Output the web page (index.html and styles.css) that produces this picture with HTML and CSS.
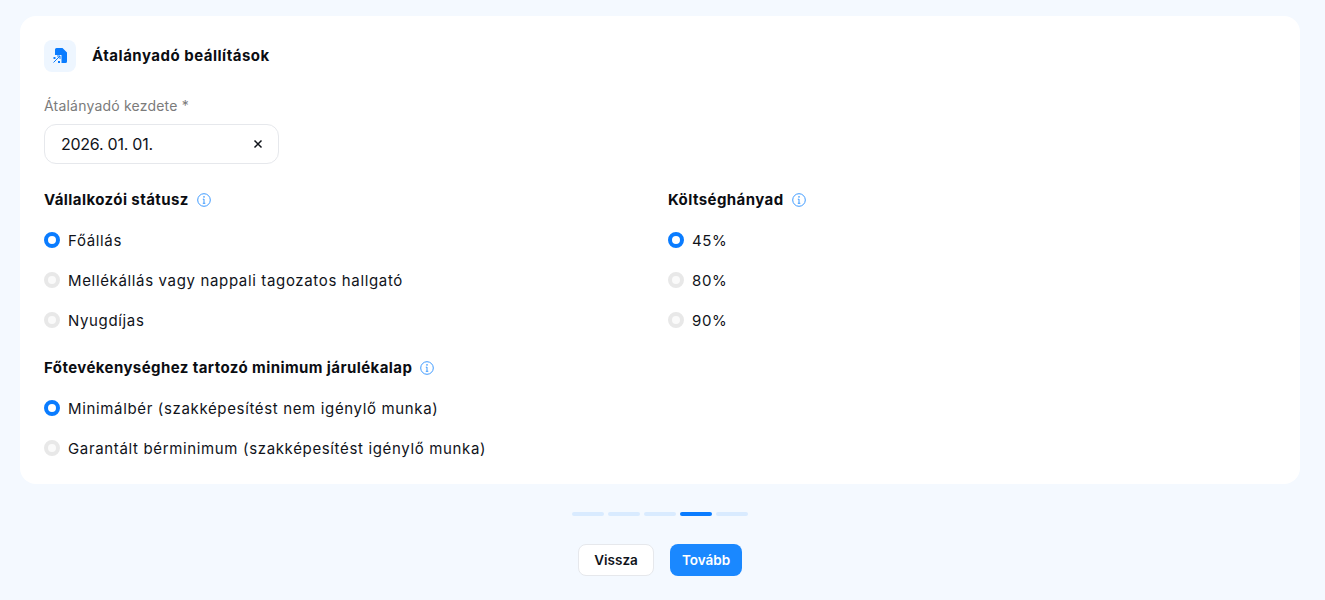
FILE: index.html
```html
<!DOCTYPE html>
<html lang="hu">
<head>
<meta charset="utf-8">
<title>Átalányadó beállítások</title>
<link rel="stylesheet" href="styles.css">
</head>
<body>
<main class="page">
  <section class="card">
    <header class="card-head">
      <span class="head-icon">
        <svg width="16" height="16" viewBox="0 0 16 16" aria-hidden="true">
          <path d="M4.500 0H10.500L15 4.500V13.500a1.500 1.500 0 0 1-1.500 1.500H9.500V7H3V1.500A1.500 1.500 0 0 1 4.500 0z" fill="#0a7cff"/>
          <path d="M1.500 14.500 8 8M5 8h3v3" fill="none" stroke="#0a7cff" stroke-width="1"/>
          <rect x="1.500" y="9" width="2" height="2" fill="#0a7cff"/>
          <rect x="6" y="13" width="2" height="2" fill="#0a7cff"/>
        </svg>
      </span>
      <h1 class="card-title">Átalányadó beállítások</h1>
    </header>

    <div class="date-field">
      <label class="field-label" for="start">Átalányadó kezdete *</label>
      <div class="date-input">
        <span id="start" class="date-value">2026. 01. 01.</span>
        <svg class="clear" width="10" height="10" viewBox="0 0 10 10" aria-hidden="true"><path d="M1.500 1.500l7 7M8.500 1.500l-7 7" stroke="#10131a" stroke-width="1.500" fill="none"/></svg>
      </div>
    </div>

    <div class="cols">
      <div class="group">
        <h2 class="group-title">Vállalkozói státusz
          <svg class="info" width="14" height="14" viewBox="0 0 14 14" aria-hidden="true"><circle cx="7" cy="7" r="6.300" fill="none" stroke="#3f9bff" stroke-width="1"/><path d="M7 6v4.200M5.800 6.200H7M5.800 10.300h2.500" stroke="#3f9bff" fill="none"/><circle cx="7" cy="3.900" r=".8" fill="#3f9bff"/></svg>
        </h2>
        <div class="radio"><span class="dot on"></span>Főállás</div>
        <div class="radio"><span class="dot"></span>Mellékállás vagy nappali tagozatos hallgató</div>
        <div class="radio"><span class="dot"></span>Nyugdíjas</div>
      </div>
      <div class="group">
        <h2 class="group-title">Költséghányad
          <svg class="info" width="14" height="14" viewBox="0 0 14 14" aria-hidden="true"><circle cx="7" cy="7" r="6.300" fill="none" stroke="#3f9bff" stroke-width="1"/><path d="M7 6v4.200M5.800 6.200H7M5.800 10.300h2.500" stroke="#3f9bff" fill="none"/><circle cx="7" cy="3.900" r=".8" fill="#3f9bff"/></svg>
        </h2>
        <div class="radio"><span class="dot on"></span>45%</div>
        <div class="radio"><span class="dot"></span>80%</div>
        <div class="radio"><span class="dot"></span>90%</div>
      </div>
    </div>

    <div class="group group-last">
      <h2 class="group-title">Főtevékenységhez tartozó minimum járulékalap
        <svg class="info" width="14" height="14" viewBox="0 0 14 14" aria-hidden="true"><circle cx="7" cy="7" r="6.300" fill="none" stroke="#3f9bff" stroke-width="1"/><path d="M7 6v4.200M5.800 6.200H7M5.800 10.300h2.500" stroke="#3f9bff" fill="none"/><circle cx="7" cy="3.900" r=".8" fill="#3f9bff"/></svg>
      </h2>
      <div class="radio"><span class="dot on"></span>Minimálbér (szakképesítést nem igénylő munka)</div>
      <div class="radio"><span class="dot"></span>Garantált bérminimum (szakképesítést igénylő munka)</div>
    </div>
  </section>

  <div class="steps">
    <span class="step"></span><span class="step"></span><span class="step"></span><span class="step active"></span><span class="step"></span>
  </div>

  <div class="actions">
    <button class="btn btn-back" type="button">Vissza</button>
    <button class="btn btn-next" type="button">Tovább</button>
  </div>
</main>
</body>
</html>
```
FILE: styles.css
```css
* { box-sizing: border-box; }
html, body { margin: 0; height: 100%; }
body {
  background: #f4f9ff;
  color: #10131a;
  font-family: Inter, "Liberation Sans", sans-serif;
  overflow: hidden;
}
.page { padding: 16px 25px 0 20px; display: flex; flex-direction: column; align-items: stretch; }
.card {
  background: #fff;
  border-radius: 16px;
  padding: 24px 24px 16px;
  height: 468px;
}
.card-head { display: flex; align-items: center; gap: 16px; height: 32px; }
.head-icon {
  width: 32px; height: 32px; border-radius: 8px; background: #eef6ff;
  display: flex; align-items: center; justify-content: center;
}
.card-title { margin: 0; font-size: 15px; font-weight: 700; line-height: 20px; letter-spacing: .5px; color: #0b0d12; }
.date-field { margin-top: 24px; width: 235px; }
.field-label { display: block; font-size: 14px; line-height: 20px; color: #7b7b7b; letter-spacing: .2px; }
.date-input {
  margin-top: 8px; height: 40px; padding: 0 15px 0 16px;
  background: #fff; border: 1px solid #e6e8ec; border-radius: 12px;
  display: flex; align-items: center; justify-content: space-between;
}
.date-value { font-size: 16px; letter-spacing: -.25px; }
.cols { display: grid; grid-template-columns: 1fr 1fr; gap: 16px; margin-top: 24px; }
.group-title {
  margin: 0; height: 24px; display: flex; align-items: center; gap: 8px;
  font-size: 15px; font-weight: 700; line-height: 24px; letter-spacing: .42px; color: #0b0d12;
}
.radio { display: flex; align-items: center; gap: 8px; height: 40px; font-size: 15px; letter-spacing: .65px; }
.group-title + .radio { margin-top: 8px; }
.group-last { margin-top: 16px; }
.dot {
  width: 16px; height: 16px; border-radius: 50%; background: #fafafa;
  border: 4px solid #e8e8e8; flex: none;
}
.dot.on { background: #fff; border-color: #0a7cff; }
.steps { display: flex; justify-content: center; gap: 4px; margin-top: 28px; }
.step { width: 32px; height: 4px; border-radius: 2px; background: #d9ebff; }
.step.active { background: #0a7cff; }
.actions { display: flex; justify-content: center; gap: 16px; margin-top: 28px; }
.btn {
  height: 32px; border-radius: 8px; font-family: inherit; font-size: 13.500px; font-weight: 600;
  padding: 0; cursor: pointer;
}
.btn-back { width: 76px; background: #fff; border: 1px solid #e6e8ec; color: #10131a; }
.btn-next { width: 72px; background: #1a88ff; border: 0; color: #fff; }
```
